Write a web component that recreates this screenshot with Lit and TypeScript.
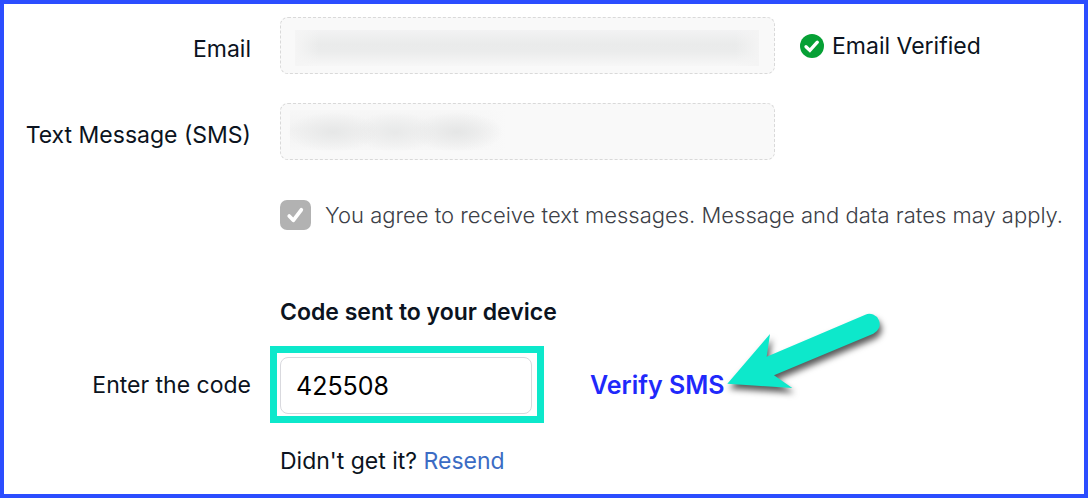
import { LitElement, html, css } from "lit";
import { customElement } from "lit/decorators.js";

@customElement("app-root")
export class AppRoot extends LitElement {
  static styles = css`
    :host {
      display: block;
      font-family: Inter, "Liberation Sans", sans-serif;
      font-size: 23px;
      font-weight: 400;
      line-height: 28px;
      color: #0b1320;
    }
    * { box-sizing: border-box; }
    .panel {
      border: 4px solid #2b4dff;
      min-height: 100vh;
      padding: 13px 16px 16px 8px;
      background: #fff;
    }
    .form {
      display: grid;
      grid-template-columns: 239px 1fr;
      column-gap: 29px;
    }
    .label { text-align: right; align-self: center; }
    .contact { padding-top: 6px; }
    .row { display: flex; align-items: center; gap: 25px; }
    .spaced { margin-bottom: 29px; }
    input { font: inherit; margin: 0; }
    .field {
      width: 495px;
      height: 57px;
      border: 1px dashed #d9d9d9;
      border-radius: 8px;
      padding: 0 15px;
      background-color: #f9f9f9;
      background-repeat: no-repeat;
    }
    .email {
      background-image:
        linear-gradient(to right, #f5f5f5, #f5f5f500),
        linear-gradient(to left, #f4f4f4, #f4f4f400),
        linear-gradient(#f2f2f3, #eaebeb 40%, #ebecec 60%, #f7f7f7);
      background-size: 24px 36px, 24px 36px, 464px 36px;
      background-position: 14px 12px, 454px 12px, 14px 12px;
    }
    .sms {
      background-image:
        radial-gradient(closest-side, #e6e7e7, #e6e7e700),
        radial-gradient(closest-side, #e8e9e9, #e8e9e900),
        radial-gradient(closest-side, #e5e6e6, #e5e6e600),
        linear-gradient(to right, #f9f9f900 80%, #f9f9f9),
        linear-gradient(#f7f7f7, #f2f2f2 50%, #f7f7f7);
      background-size: 92px 40px, 84px 40px, 92px 40px, 216px 40px, 216px 40px;
      background-position: 6px 8px, 72px 8px, 130px 8px, 9px 6px, 9px 6px;
    }
    .verified { display: flex; align-items: center; gap: 8px; }
    .agree {
      grid-column: 2;
      display: flex;
      align-items: center;
      gap: 14px;
      margin: 11px 0 68px;
      font-size: 22px;
      font-weight: 300;
      color: #3c4047;
    }
    .tick { display: grid; flex: none; }
    .tick > * { grid-area: 1 / 1; width: 31px; height: 30px; }
    .tick input {
      appearance: none;
      border-radius: 7px;
      background: #b2b2b2;
    }
    .tick svg { pointer-events: none; }
    .title {
      grid-column: 2;
      margin: 0 0 20px;
      font-size: 23px;
      font-weight: 600;
    }
    .highlight {
      border: 7px solid #0de8cb;
      padding: 4px 5px 2px 3px;
      margin-left: -10px;
      display: flex;
    }
    .code {
      width: 252px;
      height: 57px;
      border: 1px solid #d9d9de;
      border-radius: 8px;
      padding: 0 15px;
      font-size: 25px;
      color: #000;
      background: #fff;
    }
    .action { position: relative; margin-left: 21px; display: flex; }
    .verify {
      font: inherit;
      font-size: 25px;
      font-weight: 600;
      border: 0;
      padding: 0;
      background: none;
      color: #1f29fb;
    }
    .arrow {
      position: absolute;
      left: 100%;
      bottom: 0;
      width: 168px;
      height: 89px;
      overflow: visible;
      pointer-events: none;
      filter: drop-shadow(2px 5px 3px rgba(0, 0, 0, 0.65));
    }
    .resend { grid-column: 2; margin: 24px 0 0; }
    a { color: #3b6cc4; text-decoration: none; }
  `;

  render() {
    return html`
      <main class="panel">
        <form class="form">
          <label class="label contact spaced" for="email">Email</label>
          <div class="row spaced">
            <input id="email" class="field email" type="email" disabled />
            <span class="verified">
              <svg width="24" height="24" viewBox="0 0 24 24" aria-hidden="true">
                <circle cx="12" cy="12" r="12" fill="#06a035" />
                <path d="M6 12.7 9.9 16.4 17.3 8.2" fill="none" stroke="#fff" stroke-width="3.3" stroke-linecap="round" />
              </svg>
              Email Verified
            </span>
          </div>

          <label class="label contact spaced" for="sms">Text Message (SMS)</label>
          <div class="row spaced">
            <input id="sms" class="field sms" type="tel" disabled />
          </div>

          <label class="agree">
            <span class="tick">
              <input type="checkbox" checked disabled />
              <svg viewBox="0 0 31 30" aria-hidden="true">
                <path d="M9.2 16 13.3 20.3 21.3 9.8" fill="none" stroke="#fff" stroke-width="3.7" stroke-linecap="round" stroke-linejoin="round" />
              </svg>
            </span>
            You agree to receive text messages. Message and data rates may apply.
          </label>

          <h2 class="title">Code sent to your device</h2>

          <label class="label" for="code">Enter the code</label>
          <div class="row">
            <span class="highlight">
              <input id="code" class="code" type="text" inputmode="numeric" value="425508" />
            </span>
            <span class="action">
              <button type="button" class="verify">Verify SMS</button>
              <svg class="arrow" viewBox="461 30 504 267" aria-hidden="true">
                <path d="M468 251 596 102 586 170 882 44A30 30 0 0 1 906 101L608 226 663 264Z" fill="#0de8cb" />
              </svg>
            </span>
          </div>

          <p class="resend">Didn't get it? <a href="#">Resend</a></p>
        </form>
      </main>
    `;
  }
}
